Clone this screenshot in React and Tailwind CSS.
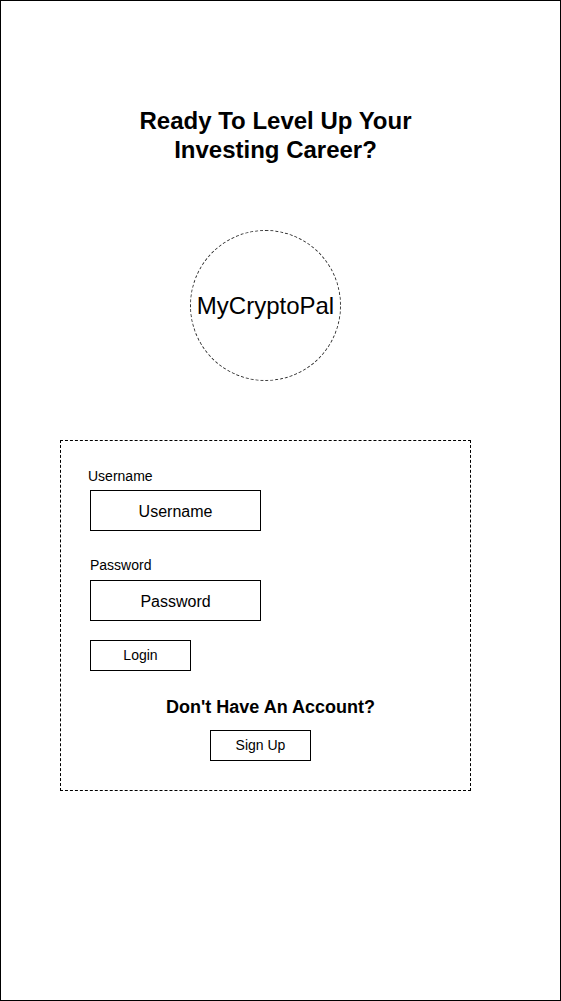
export default function App() {
  return (
    <div className="w-[561px] h-[1001px] border border-black bg-white text-black flex flex-col" style={{ fontFamily: '"Liberation Sans", Arial, sans-serif' }}>
      {/* Heading */}
      <h1 className="mt-[105px] mr-[10px] text-center text-[24px] leading-[29px] font-bold">
        Ready To Level Up Your
        <br />
        Investing Career?
      </h1>

      {/* Logo */}
      <div className="mt-[66px] ml-[189px] w-[151px] h-[151px] rounded-full border border-dashed border-[#333] flex items-center justify-center">
        <span className="text-[24px]">MyCryptoPal</span>
      </div>

      {/* Login form */}
      <div className="mt-[59px] ml-[59px] w-[411px] h-[351px] border border-dashed border-black flex flex-col">
        <label className="mt-[27px] ml-[27px] text-[14px] leading-[16px]">Username</label>
        <div className="mt-[6px] ml-[29px] w-[171px] h-[41px] pt-[3px] border border-black flex items-center justify-center text-[16px]">
          Username
        </div>

        <label className="mt-[26px] ml-[29px] text-[14px] leading-[16px]">Password</label>
        <div className="mt-[7px] ml-[29px] w-[171px] h-[41px] pt-[3px] border border-black flex items-center justify-center text-[16px]">
          Password
        </div>

        <button className="mt-[19px] ml-[29px] w-[101px] h-[31px] border border-black flex items-center justify-center text-[14px]">
          Login
        </button>

        <p className="mt-[26px] ml-[10px] text-center text-[18px] leading-[21px] font-bold">Don't Have An Account?</p>

        <button className="mt-[12px] ml-[149px] w-[101px] h-[31px] border border-black flex items-center justify-center text-[14px]">
          Sign Up
        </button>
      </div>
    </div>
  );
}
